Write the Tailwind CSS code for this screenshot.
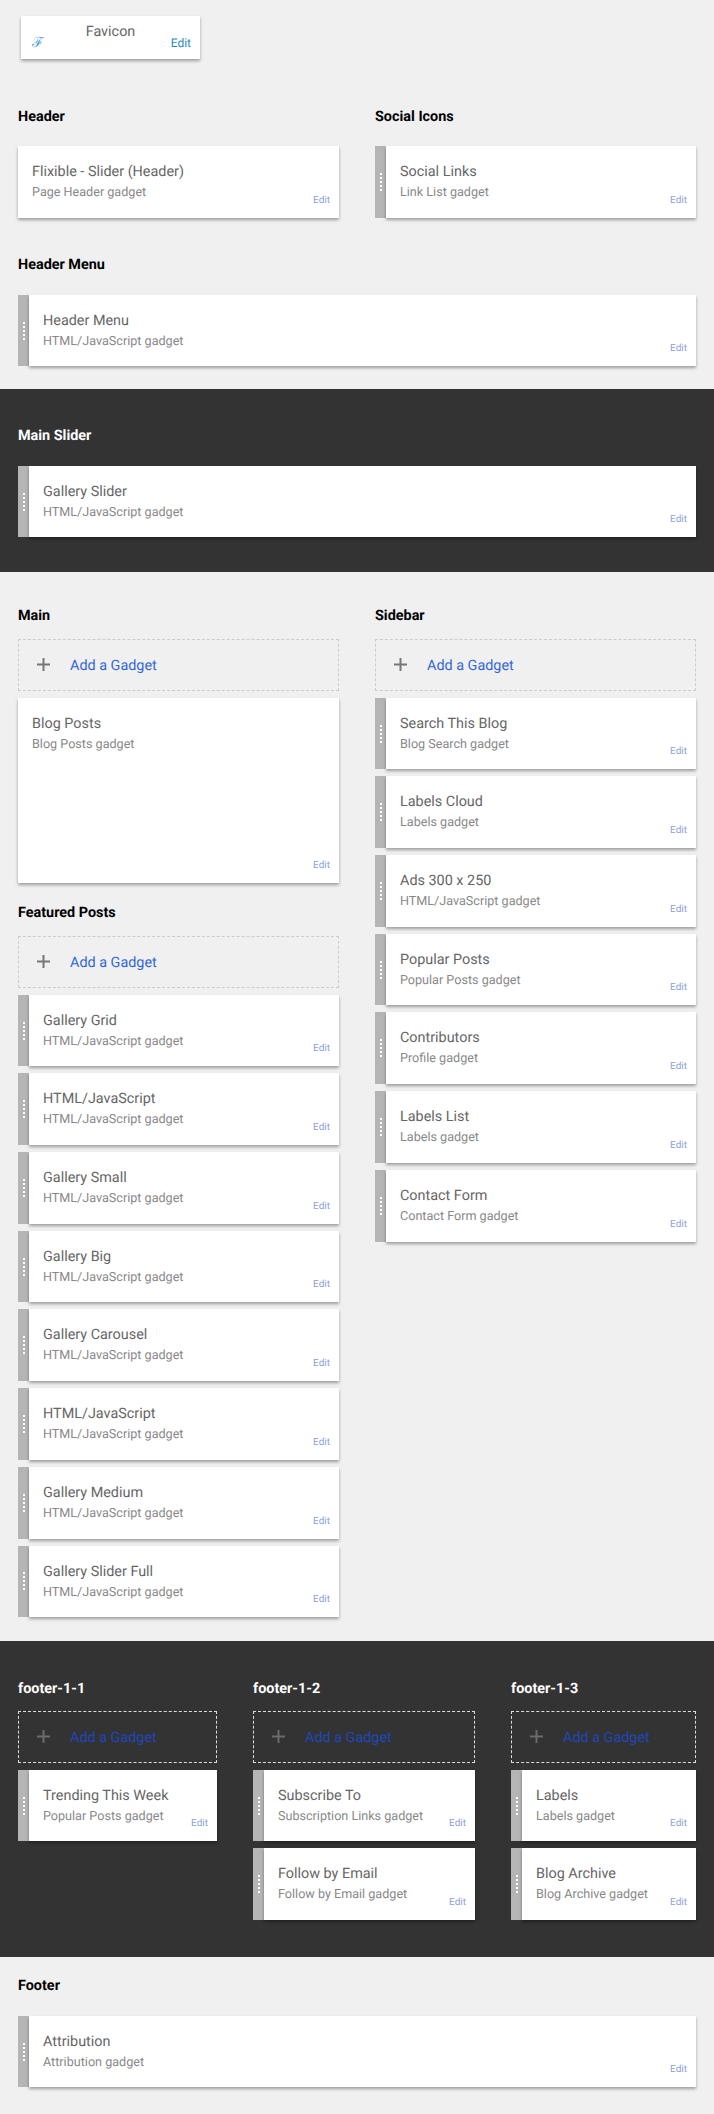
<!DOCTYPE html>
<html lang="en">
<head>
<meta charset="UTF-8">
<title>Layout</title>
<script src="https://cdn.jsdelivr.net/npm/@tailwindcss/browser@4"></script>
</head>
<body class="bg-[#f0f0f0] font-['Roboto',sans-serif] [text-rendering:geometricPrecision] w-[714px] h-[2114px] overflow-hidden">

<!-- Favicon -->
<div class="pt-4 pl-[21px] h-[106px]">
  <div class="relative w-[179px] h-[43px] bg-white shadow-[0_2px_3px_rgba(0,0,0,.35)]">
    <div class="text-center text-[14.4px] leading-5 pt-[6px] text-[#666]">Favicon</div>
    <span class="absolute left-[11px] top-[17px] text-[14px] leading-5 font-['DejaVu_Serif',serif] text-[#5a9fdc]">ℱ</span>
    <span class="absolute right-[9px] top-[17px] text-[12px] leading-5 text-[#1f8cb8]">Edit</span>
  </div>
</div>

<!-- Header + Social Icons -->
<div class="flex gap-9 px-[18px]">
  <div class="w-[321px]">
    <h3 class="text-[14.4px] font-bold text-black leading-5 h-10 pt-[1px]">Header</h3>
    <div class="flex justify-between h-[71.7px] bg-white shadow-[0_2px_3px_rgba(0,0,0,.35)]">
      <div class="pl-[14px] pt-4"><div class="text-[14.4px] leading-5 text-[#666]">Flixible - Slider (Header)</div><div class="text-[12.6px] leading-5 mt-[1px] text-[#888]">Page Header gadget</div></div>
      <span class="self-end pr-[9px] pb-[9px] text-[10px] leading-4 text-[#8e9fdb]">Edit</span>
    </div>
  </div>
  <div class="w-[321px]">
    <h3 class="text-[14.4px] font-bold text-black leading-5 h-10 pt-[1px]">Social Icons</h3>
    <div class="flex h-[71.7px]">
      <div class="w-[11px] bg-[#b5b5b5] flex flex-col items-center justify-center gap-[2px]"><i class="size-[2px] bg-white"></i><i class="size-[2px] bg-white"></i><i class="size-[2px] bg-white"></i><i class="size-[2px] bg-white"></i><i class="size-[2px] bg-white"></i></div>
      <div class="flex-1 flex justify-between bg-white shadow-[0_2px_3px_rgba(0,0,0,.35)]">
        <div class="pl-[14px] pt-4"><div class="text-[14.4px] leading-5 text-[#666]">Social Links</div><div class="text-[12.6px] leading-5 mt-[1px] text-[#888]">Link List gadget</div></div>
        <span class="self-end pr-[9px] pb-[9px] text-[10px] leading-4 text-[#8e9fdb]">Edit</span>
      </div>
    </div>
  </div>
</div>

<!-- Header Menu -->
<div class="px-[18px] pt-9 h-[171px]">
  <h3 class="text-[14.4px] font-bold text-black leading-5 h-[41px] pt-[1px]">Header Menu</h3>
  <div class="flex h-[71.7px]">
    <div class="w-[11px] bg-[#b5b5b5] flex flex-col items-center justify-center gap-[2px]"><i class="size-[2px] bg-white"></i><i class="size-[2px] bg-white"></i><i class="size-[2px] bg-white"></i><i class="size-[2px] bg-white"></i><i class="size-[2px] bg-white"></i></div>
    <div class="flex-1 flex justify-between bg-white shadow-[0_2px_3px_rgba(0,0,0,.35)]">
      <div class="pl-[14px] pt-4"><div class="text-[14.4px] leading-5 text-[#666]">Header Menu</div><div class="text-[12.6px] leading-5 mt-[1px] text-[#888]">HTML/JavaScript gadget</div></div>
      <span class="self-end pr-[9px] pb-[9px] text-[10px] leading-4 text-[#8e9fdb]">Edit</span>
    </div>
  </div>
</div>

<!-- Main Slider -->
<div class="bg-[#333] h-[183px] px-[18px] pt-9">
  <h3 class="text-[14.4px] font-bold text-white leading-5 h-[41px] pt-[1px]">Main Slider</h3>
  <div class="flex h-[71.7px]">
    <div class="w-[11px] bg-[#b5b5b5] flex flex-col items-center justify-center gap-[2px]"><i class="size-[2px] bg-white"></i><i class="size-[2px] bg-white"></i><i class="size-[2px] bg-white"></i><i class="size-[2px] bg-white"></i><i class="size-[2px] bg-white"></i></div>
    <div class="flex-1 flex justify-between bg-white shadow-[0_2px_3px_rgba(0,0,0,.35)]">
      <div class="pl-[14px] pt-4"><div class="text-[14.4px] leading-5 text-[#666]">Gallery Slider</div><div class="text-[12.6px] leading-5 mt-[1px] text-[#888]">HTML/JavaScript gadget</div></div>
      <span class="self-end pr-[9px] pb-[9px] text-[10px] leading-4 text-[#8e9fdb]">Edit</span>
    </div>
  </div>
</div>

<!-- Main + Sidebar -->
<div class="flex gap-9 px-[18px] pt-[33px] h-[1069px]">
  <div class="w-[321px] flex flex-col gap-[7px]">
    <h3 class="text-[14.4px] font-bold text-black leading-5 h-[27px] pt-[1px]">Main</h3>
    <div class="h-[52px] border border-dashed border-[#ccc] flex items-center pl-[18px] gap-[20px]">
      <svg class="w-[13px] h-[13px]" viewBox="0 0 13 13"><path d="M6.5 0v13M0 6.5h13" stroke="#777" stroke-width="2"/></svg>
      <span class="text-[14.4px] pt-[2px] text-[#3367d6]">Add a Gadget</span>
    </div>
    <div class="flex justify-between h-[185px] bg-white shadow-[0_2px_3px_rgba(0,0,0,.35)]">
      <div class="pl-[14px] pt-4"><div class="text-[14.4px] leading-5 text-[#666]">Blog Posts</div><div class="text-[12.6px] leading-5 mt-[1px] text-[#888]">Blog Posts gadget</div></div>
      <span class="self-end pr-[9px] pb-[9px] text-[10px] leading-4 text-[#8e9fdb]">Edit</span>
    </div>

    <h3 class="text-[14.4px] font-bold text-black leading-5 h-[27px] mt-3 pt-[1px]">Featured Posts</h3>
    <div class="h-[52px] border border-dashed border-[#ccc] flex items-center pl-[18px] gap-[20px]">
      <svg class="w-[13px] h-[13px]" viewBox="0 0 13 13"><path d="M6.5 0v13M0 6.5h13" stroke="#777" stroke-width="2"/></svg>
      <span class="text-[14.4px] pt-[2px] text-[#3367d6]">Add a Gadget</span>
    </div>
    <div class="flex h-[71.7px]">
      <div class="w-[11px] bg-[#b5b5b5] flex flex-col items-center justify-center gap-[2px]"><i class="size-[2px] bg-white"></i><i class="size-[2px] bg-white"></i><i class="size-[2px] bg-white"></i><i class="size-[2px] bg-white"></i><i class="size-[2px] bg-white"></i></div>
      <div class="flex-1 flex justify-between bg-white shadow-[0_2px_3px_rgba(0,0,0,.35)]">
        <div class="pl-[14px] pt-4"><div class="text-[14.4px] leading-5 text-[#666]">Gallery Grid</div><div class="text-[12.6px] leading-5 mt-[1px] text-[#888]">HTML/JavaScript gadget</div></div>
        <span class="self-end pr-[9px] pb-[9px] text-[10px] leading-4 text-[#8e9fdb]">Edit</span>
      </div>
    </div>
    <div class="flex h-[71.7px]">
      <div class="w-[11px] bg-[#b5b5b5] flex flex-col items-center justify-center gap-[2px]"><i class="size-[2px] bg-white"></i><i class="size-[2px] bg-white"></i><i class="size-[2px] bg-white"></i><i class="size-[2px] bg-white"></i><i class="size-[2px] bg-white"></i></div>
      <div class="flex-1 flex justify-between bg-white shadow-[0_2px_3px_rgba(0,0,0,.35)]">
        <div class="pl-[14px] pt-4"><div class="text-[14.4px] leading-5 text-[#666]">HTML/JavaScript</div><div class="text-[12.6px] leading-5 mt-[1px] text-[#888]">HTML/JavaScript gadget</div></div>
        <span class="self-end pr-[9px] pb-[9px] text-[10px] leading-4 text-[#8e9fdb]">Edit</span>
      </div>
    </div>
    <div class="flex h-[71.7px]">
      <div class="w-[11px] bg-[#b5b5b5] flex flex-col items-center justify-center gap-[2px]"><i class="size-[2px] bg-white"></i><i class="size-[2px] bg-white"></i><i class="size-[2px] bg-white"></i><i class="size-[2px] bg-white"></i><i class="size-[2px] bg-white"></i></div>
      <div class="flex-1 flex justify-between bg-white shadow-[0_2px_3px_rgba(0,0,0,.35)]">
        <div class="pl-[14px] pt-4"><div class="text-[14.4px] leading-5 text-[#666]">Gallery Small</div><div class="text-[12.6px] leading-5 mt-[1px] text-[#888]">HTML/JavaScript gadget</div></div>
        <span class="self-end pr-[9px] pb-[9px] text-[10px] leading-4 text-[#8e9fdb]">Edit</span>
      </div>
    </div>
    <div class="flex h-[71.7px]">
      <div class="w-[11px] bg-[#b5b5b5] flex flex-col items-center justify-center gap-[2px]"><i class="size-[2px] bg-white"></i><i class="size-[2px] bg-white"></i><i class="size-[2px] bg-white"></i><i class="size-[2px] bg-white"></i><i class="size-[2px] bg-white"></i></div>
      <div class="flex-1 flex justify-between bg-white shadow-[0_2px_3px_rgba(0,0,0,.35)]">
        <div class="pl-[14px] pt-4"><div class="text-[14.4px] leading-5 text-[#666]">Gallery Big</div><div class="text-[12.6px] leading-5 mt-[1px] text-[#888]">HTML/JavaScript gadget</div></div>
        <span class="self-end pr-[9px] pb-[9px] text-[10px] leading-4 text-[#8e9fdb]">Edit</span>
      </div>
    </div>
    <div class="flex h-[71.7px]">
      <div class="w-[11px] bg-[#b5b5b5] flex flex-col items-center justify-center gap-[2px]"><i class="size-[2px] bg-white"></i><i class="size-[2px] bg-white"></i><i class="size-[2px] bg-white"></i><i class="size-[2px] bg-white"></i><i class="size-[2px] bg-white"></i></div>
      <div class="flex-1 flex justify-between bg-white shadow-[0_2px_3px_rgba(0,0,0,.35)]">
        <div class="pl-[14px] pt-4"><div class="text-[14.4px] leading-5 text-[#666]">Gallery Carousel</div><div class="text-[12.6px] leading-5 mt-[1px] text-[#888]">HTML/JavaScript gadget</div></div>
        <span class="self-end pr-[9px] pb-[9px] text-[10px] leading-4 text-[#8e9fdb]">Edit</span>
      </div>
    </div>
    <div class="flex h-[71.7px]">
      <div class="w-[11px] bg-[#b5b5b5] flex flex-col items-center justify-center gap-[2px]"><i class="size-[2px] bg-white"></i><i class="size-[2px] bg-white"></i><i class="size-[2px] bg-white"></i><i class="size-[2px] bg-white"></i><i class="size-[2px] bg-white"></i></div>
      <div class="flex-1 flex justify-between bg-white shadow-[0_2px_3px_rgba(0,0,0,.35)]">
        <div class="pl-[14px] pt-4"><div class="text-[14.4px] leading-5 text-[#666]">HTML/JavaScript</div><div class="text-[12.6px] leading-5 mt-[1px] text-[#888]">HTML/JavaScript gadget</div></div>
        <span class="self-end pr-[9px] pb-[9px] text-[10px] leading-4 text-[#8e9fdb]">Edit</span>
      </div>
    </div>
    <div class="flex h-[71.7px]">
      <div class="w-[11px] bg-[#b5b5b5] flex flex-col items-center justify-center gap-[2px]"><i class="size-[2px] bg-white"></i><i class="size-[2px] bg-white"></i><i class="size-[2px] bg-white"></i><i class="size-[2px] bg-white"></i><i class="size-[2px] bg-white"></i></div>
      <div class="flex-1 flex justify-between bg-white shadow-[0_2px_3px_rgba(0,0,0,.35)]">
        <div class="pl-[14px] pt-4"><div class="text-[14.4px] leading-5 text-[#666]">Gallery Medium</div><div class="text-[12.6px] leading-5 mt-[1px] text-[#888]">HTML/JavaScript gadget</div></div>
        <span class="self-end pr-[9px] pb-[9px] text-[10px] leading-4 text-[#8e9fdb]">Edit</span>
      </div>
    </div>
    <div class="flex h-[71.7px]">
      <div class="w-[11px] bg-[#b5b5b5] flex flex-col items-center justify-center gap-[2px]"><i class="size-[2px] bg-white"></i><i class="size-[2px] bg-white"></i><i class="size-[2px] bg-white"></i><i class="size-[2px] bg-white"></i><i class="size-[2px] bg-white"></i></div>
      <div class="flex-1 flex justify-between bg-white shadow-[0_2px_3px_rgba(0,0,0,.35)]">
        <div class="pl-[14px] pt-4"><div class="text-[14.4px] leading-5 text-[#666]">Gallery Slider Full</div><div class="text-[12.6px] leading-5 mt-[1px] text-[#888]">HTML/JavaScript gadget</div></div>
        <span class="self-end pr-[9px] pb-[9px] text-[10px] leading-4 text-[#8e9fdb]">Edit</span>
      </div>
    </div>
  </div>

  <div class="w-[321px] flex flex-col gap-[7px]">
    <h3 class="text-[14.4px] font-bold text-black leading-5 h-[27px] pt-[1px]">Sidebar</h3>
    <div class="h-[52px] border border-dashed border-[#ccc] flex items-center pl-[18px] gap-[20px]">
      <svg class="w-[13px] h-[13px]" viewBox="0 0 13 13"><path d="M6.5 0v13M0 6.5h13" stroke="#777" stroke-width="2"/></svg>
      <span class="text-[14.4px] pt-[2px] text-[#3367d6]">Add a Gadget</span>
    </div>
    <div class="flex h-[71.7px]">
      <div class="w-[11px] bg-[#b5b5b5] flex flex-col items-center justify-center gap-[2px]"><i class="size-[2px] bg-white"></i><i class="size-[2px] bg-white"></i><i class="size-[2px] bg-white"></i><i class="size-[2px] bg-white"></i><i class="size-[2px] bg-white"></i></div>
      <div class="flex-1 flex justify-between bg-white shadow-[0_2px_3px_rgba(0,0,0,.35)]">
        <div class="pl-[14px] pt-4"><div class="text-[14.4px] leading-5 text-[#666]">Search This Blog</div><div class="text-[12.6px] leading-5 mt-[1px] text-[#888]">Blog Search gadget</div></div>
        <span class="self-end pr-[9px] pb-[9px] text-[10px] leading-4 text-[#8e9fdb]">Edit</span>
      </div>
    </div>
    <div class="flex h-[71.7px]">
      <div class="w-[11px] bg-[#b5b5b5] flex flex-col items-center justify-center gap-[2px]"><i class="size-[2px] bg-white"></i><i class="size-[2px] bg-white"></i><i class="size-[2px] bg-white"></i><i class="size-[2px] bg-white"></i><i class="size-[2px] bg-white"></i></div>
      <div class="flex-1 flex justify-between bg-white shadow-[0_2px_3px_rgba(0,0,0,.35)]">
        <div class="pl-[14px] pt-4"><div class="text-[14.4px] leading-5 text-[#666]">Labels Cloud</div><div class="text-[12.6px] leading-5 mt-[1px] text-[#888]">Labels gadget</div></div>
        <span class="self-end pr-[9px] pb-[9px] text-[10px] leading-4 text-[#8e9fdb]">Edit</span>
      </div>
    </div>
    <div class="flex h-[71.7px]">
      <div class="w-[11px] bg-[#b5b5b5] flex flex-col items-center justify-center gap-[2px]"><i class="size-[2px] bg-white"></i><i class="size-[2px] bg-white"></i><i class="size-[2px] bg-white"></i><i class="size-[2px] bg-white"></i><i class="size-[2px] bg-white"></i></div>
      <div class="flex-1 flex justify-between bg-white shadow-[0_2px_3px_rgba(0,0,0,.35)]">
        <div class="pl-[14px] pt-4"><div class="text-[14.4px] leading-5 text-[#666]">Ads 300 x 250</div><div class="text-[12.6px] leading-5 mt-[1px] text-[#888]">HTML/JavaScript gadget</div></div>
        <span class="self-end pr-[9px] pb-[9px] text-[10px] leading-4 text-[#8e9fdb]">Edit</span>
      </div>
    </div>
    <div class="flex h-[71.7px]">
      <div class="w-[11px] bg-[#b5b5b5] flex flex-col items-center justify-center gap-[2px]"><i class="size-[2px] bg-white"></i><i class="size-[2px] bg-white"></i><i class="size-[2px] bg-white"></i><i class="size-[2px] bg-white"></i><i class="size-[2px] bg-white"></i></div>
      <div class="flex-1 flex justify-between bg-white shadow-[0_2px_3px_rgba(0,0,0,.35)]">
        <div class="pl-[14px] pt-4"><div class="text-[14.4px] leading-5 text-[#666]">Popular Posts</div><div class="text-[12.6px] leading-5 mt-[1px] text-[#888]">Popular Posts gadget</div></div>
        <span class="self-end pr-[9px] pb-[9px] text-[10px] leading-4 text-[#8e9fdb]">Edit</span>
      </div>
    </div>
    <div class="flex h-[71.7px]">
      <div class="w-[11px] bg-[#b5b5b5] flex flex-col items-center justify-center gap-[2px]"><i class="size-[2px] bg-white"></i><i class="size-[2px] bg-white"></i><i class="size-[2px] bg-white"></i><i class="size-[2px] bg-white"></i><i class="size-[2px] bg-white"></i></div>
      <div class="flex-1 flex justify-between bg-white shadow-[0_2px_3px_rgba(0,0,0,.35)]">
        <div class="pl-[14px] pt-4"><div class="text-[14.4px] leading-5 text-[#666]">Contributors</div><div class="text-[12.6px] leading-5 mt-[1px] text-[#888]">Profile gadget</div></div>
        <span class="self-end pr-[9px] pb-[9px] text-[10px] leading-4 text-[#8e9fdb]">Edit</span>
      </div>
    </div>
    <div class="flex h-[71.7px]">
      <div class="w-[11px] bg-[#b5b5b5] flex flex-col items-center justify-center gap-[2px]"><i class="size-[2px] bg-white"></i><i class="size-[2px] bg-white"></i><i class="size-[2px] bg-white"></i><i class="size-[2px] bg-white"></i><i class="size-[2px] bg-white"></i></div>
      <div class="flex-1 flex justify-between bg-white shadow-[0_2px_3px_rgba(0,0,0,.35)]">
        <div class="pl-[14px] pt-4"><div class="text-[14.4px] leading-5 text-[#666]">Labels List</div><div class="text-[12.6px] leading-5 mt-[1px] text-[#888]">Labels gadget</div></div>
        <span class="self-end pr-[9px] pb-[9px] text-[10px] leading-4 text-[#8e9fdb]">Edit</span>
      </div>
    </div>
    <div class="flex h-[71.7px]">
      <div class="w-[11px] bg-[#b5b5b5] flex flex-col items-center justify-center gap-[2px]"><i class="size-[2px] bg-white"></i><i class="size-[2px] bg-white"></i><i class="size-[2px] bg-white"></i><i class="size-[2px] bg-white"></i><i class="size-[2px] bg-white"></i></div>
      <div class="flex-1 flex justify-between bg-white shadow-[0_2px_3px_rgba(0,0,0,.35)]">
        <div class="pl-[14px] pt-4"><div class="text-[14.4px] leading-5 text-[#666]">Contact Form</div><div class="text-[12.6px] leading-5 mt-[1px] text-[#888]">Contact Form gadget</div></div>
        <span class="self-end pr-[9px] pb-[9px] text-[10px] leading-4 text-[#8e9fdb]">Edit</span>
      </div>
    </div>
  </div>
</div>

<!-- footer columns -->
<div class="bg-[#333] h-[316px] flex gap-9 px-[18px] pt-[37px]">
  <div class="w-[199px] flex flex-col gap-[7px]">
    <h3 class="text-[14.4px] font-bold text-white leading-5 h-[26px] pt-[1px]">footer-1-1</h3>
    <div class="h-[52px] border border-dashed border-[#ddd] flex items-center pl-[18px] gap-[20px]">
      <svg class="w-[13px] h-[13px]" viewBox="0 0 13 13"><path d="M6.5 0v13M0 6.5h13" stroke="#6b6b6b" stroke-width="2"/></svg>
      <span class="text-[14.4px] pt-[2px] text-[#1f47b8]">Add a Gadget</span>
    </div>
    <div class="flex h-[71.7px]">
      <div class="w-[11px] bg-[#b5b5b5] flex flex-col items-center justify-center gap-[2px]"><i class="size-[2px] bg-white"></i><i class="size-[2px] bg-white"></i><i class="size-[2px] bg-white"></i><i class="size-[2px] bg-white"></i><i class="size-[2px] bg-white"></i></div>
      <div class="flex-1 flex justify-between bg-white shadow-[0_2px_3px_rgba(0,0,0,.35)]">
        <div class="pl-[14px] pt-4"><div class="text-[14.4px] leading-5 text-[#666]">Trending This Week</div><div class="text-[12.6px] leading-5 mt-[1px] text-[#888]">Popular Posts gadget</div></div>
        <span class="self-end pr-[9px] pb-[9px] text-[10px] leading-4 text-[#8e9fdb]">Edit</span>
      </div>
    </div>
  </div>
  <div class="w-[222px] flex flex-col gap-[7px]">
    <h3 class="text-[14.4px] font-bold text-white leading-5 h-[26px] pt-[1px]">footer-1-2</h3>
    <div class="h-[52px] border border-dashed border-[#ddd] flex items-center pl-[18px] gap-[20px]">
      <svg class="w-[13px] h-[13px]" viewBox="0 0 13 13"><path d="M6.5 0v13M0 6.5h13" stroke="#6b6b6b" stroke-width="2"/></svg>
      <span class="text-[14.4px] pt-[2px] text-[#1f47b8]">Add a Gadget</span>
    </div>
    <div class="flex h-[71.7px]">
      <div class="w-[11px] bg-[#b5b5b5] flex flex-col items-center justify-center gap-[2px]"><i class="size-[2px] bg-white"></i><i class="size-[2px] bg-white"></i><i class="size-[2px] bg-white"></i><i class="size-[2px] bg-white"></i><i class="size-[2px] bg-white"></i></div>
      <div class="flex-1 flex justify-between bg-white shadow-[0_2px_3px_rgba(0,0,0,.35)]">
        <div class="pl-[14px] pt-4"><div class="text-[14.4px] leading-5 text-[#666]">Subscribe To</div><div class="text-[12.6px] leading-5 mt-[1px] text-[#888]">Subscription Links gadget</div></div>
        <span class="self-end pr-[9px] pb-[9px] text-[10px] leading-4 text-[#8e9fdb]">Edit</span>
      </div>
    </div>
    <div class="flex h-[71.7px]">
      <div class="w-[11px] bg-[#b5b5b5] flex flex-col items-center justify-center gap-[2px]"><i class="size-[2px] bg-white"></i><i class="size-[2px] bg-white"></i><i class="size-[2px] bg-white"></i><i class="size-[2px] bg-white"></i><i class="size-[2px] bg-white"></i></div>
      <div class="flex-1 flex justify-between bg-white shadow-[0_2px_3px_rgba(0,0,0,.35)]">
        <div class="pl-[14px] pt-4"><div class="text-[14.4px] leading-5 text-[#666]">Follow by Email</div><div class="text-[12.6px] leading-5 mt-[1px] text-[#888]">Follow by Email gadget</div></div>
        <span class="self-end pr-[9px] pb-[9px] text-[10px] leading-4 text-[#8e9fdb]">Edit</span>
      </div>
    </div>
  </div>
  <div class="w-[185px] flex flex-col gap-[7px]">
    <h3 class="text-[14.4px] font-bold text-white leading-5 h-[26px] pt-[1px]">footer-1-3</h3>
    <div class="h-[52px] border border-dashed border-[#ddd] flex items-center pl-[18px] gap-[20px]">
      <svg class="w-[13px] h-[13px]" viewBox="0 0 13 13"><path d="M6.5 0v13M0 6.5h13" stroke="#6b6b6b" stroke-width="2"/></svg>
      <span class="text-[14.4px] pt-[2px] text-[#1f47b8]">Add a Gadget</span>
    </div>
    <div class="flex h-[71.7px]">
      <div class="w-[11px] bg-[#b5b5b5] flex flex-col items-center justify-center gap-[2px]"><i class="size-[2px] bg-white"></i><i class="size-[2px] bg-white"></i><i class="size-[2px] bg-white"></i><i class="size-[2px] bg-white"></i><i class="size-[2px] bg-white"></i></div>
      <div class="flex-1 flex justify-between bg-white shadow-[0_2px_3px_rgba(0,0,0,.35)]">
        <div class="pl-[14px] pt-4"><div class="text-[14.4px] leading-5 text-[#666]">Labels</div><div class="text-[12.6px] leading-5 mt-[1px] text-[#888]">Labels gadget</div></div>
        <span class="self-end pr-[9px] pb-[9px] text-[10px] leading-4 text-[#8e9fdb]">Edit</span>
      </div>
    </div>
    <div class="flex h-[71.7px]">
      <div class="w-[11px] bg-[#b5b5b5] flex flex-col items-center justify-center gap-[2px]"><i class="size-[2px] bg-white"></i><i class="size-[2px] bg-white"></i><i class="size-[2px] bg-white"></i><i class="size-[2px] bg-white"></i><i class="size-[2px] bg-white"></i></div>
      <div class="flex-1 flex justify-between bg-white shadow-[0_2px_3px_rgba(0,0,0,.35)]">
        <div class="pl-[14px] pt-4"><div class="text-[14.4px] leading-5 text-[#666]">Blog Archive</div><div class="text-[12.6px] leading-5 mt-[1px] text-[#888]">Blog Archive gadget</div></div>
        <span class="self-end pr-[9px] pb-[9px] text-[10px] leading-4 text-[#8e9fdb]">Edit</span>
      </div>
    </div>
  </div>
</div>

<!-- Footer -->
<div class="px-[18px] pt-[18px]">
  <h3 class="text-[14.4px] font-bold text-black leading-5 h-[41px] pt-[1px]">Footer</h3>
  <div class="flex h-[71.7px]">
    <div class="w-[11px] bg-[#b5b5b5] flex flex-col items-center justify-center gap-[2px]"><i class="size-[2px] bg-white"></i><i class="size-[2px] bg-white"></i><i class="size-[2px] bg-white"></i><i class="size-[2px] bg-white"></i><i class="size-[2px] bg-white"></i></div>
    <div class="flex-1 flex justify-between bg-white shadow-[0_2px_3px_rgba(0,0,0,.35)]">
      <div class="pl-[14px] pt-4"><div class="text-[14.4px] leading-5 text-[#666]">Attribution</div><div class="text-[12.6px] leading-5 mt-[1px] text-[#888]">Attribution gadget</div></div>
      <span class="self-end pr-[9px] pb-[9px] text-[10px] leading-4 text-[#8e9fdb]">Edit</span>
    </div>
  </div>
</div>

</body>
</html>
